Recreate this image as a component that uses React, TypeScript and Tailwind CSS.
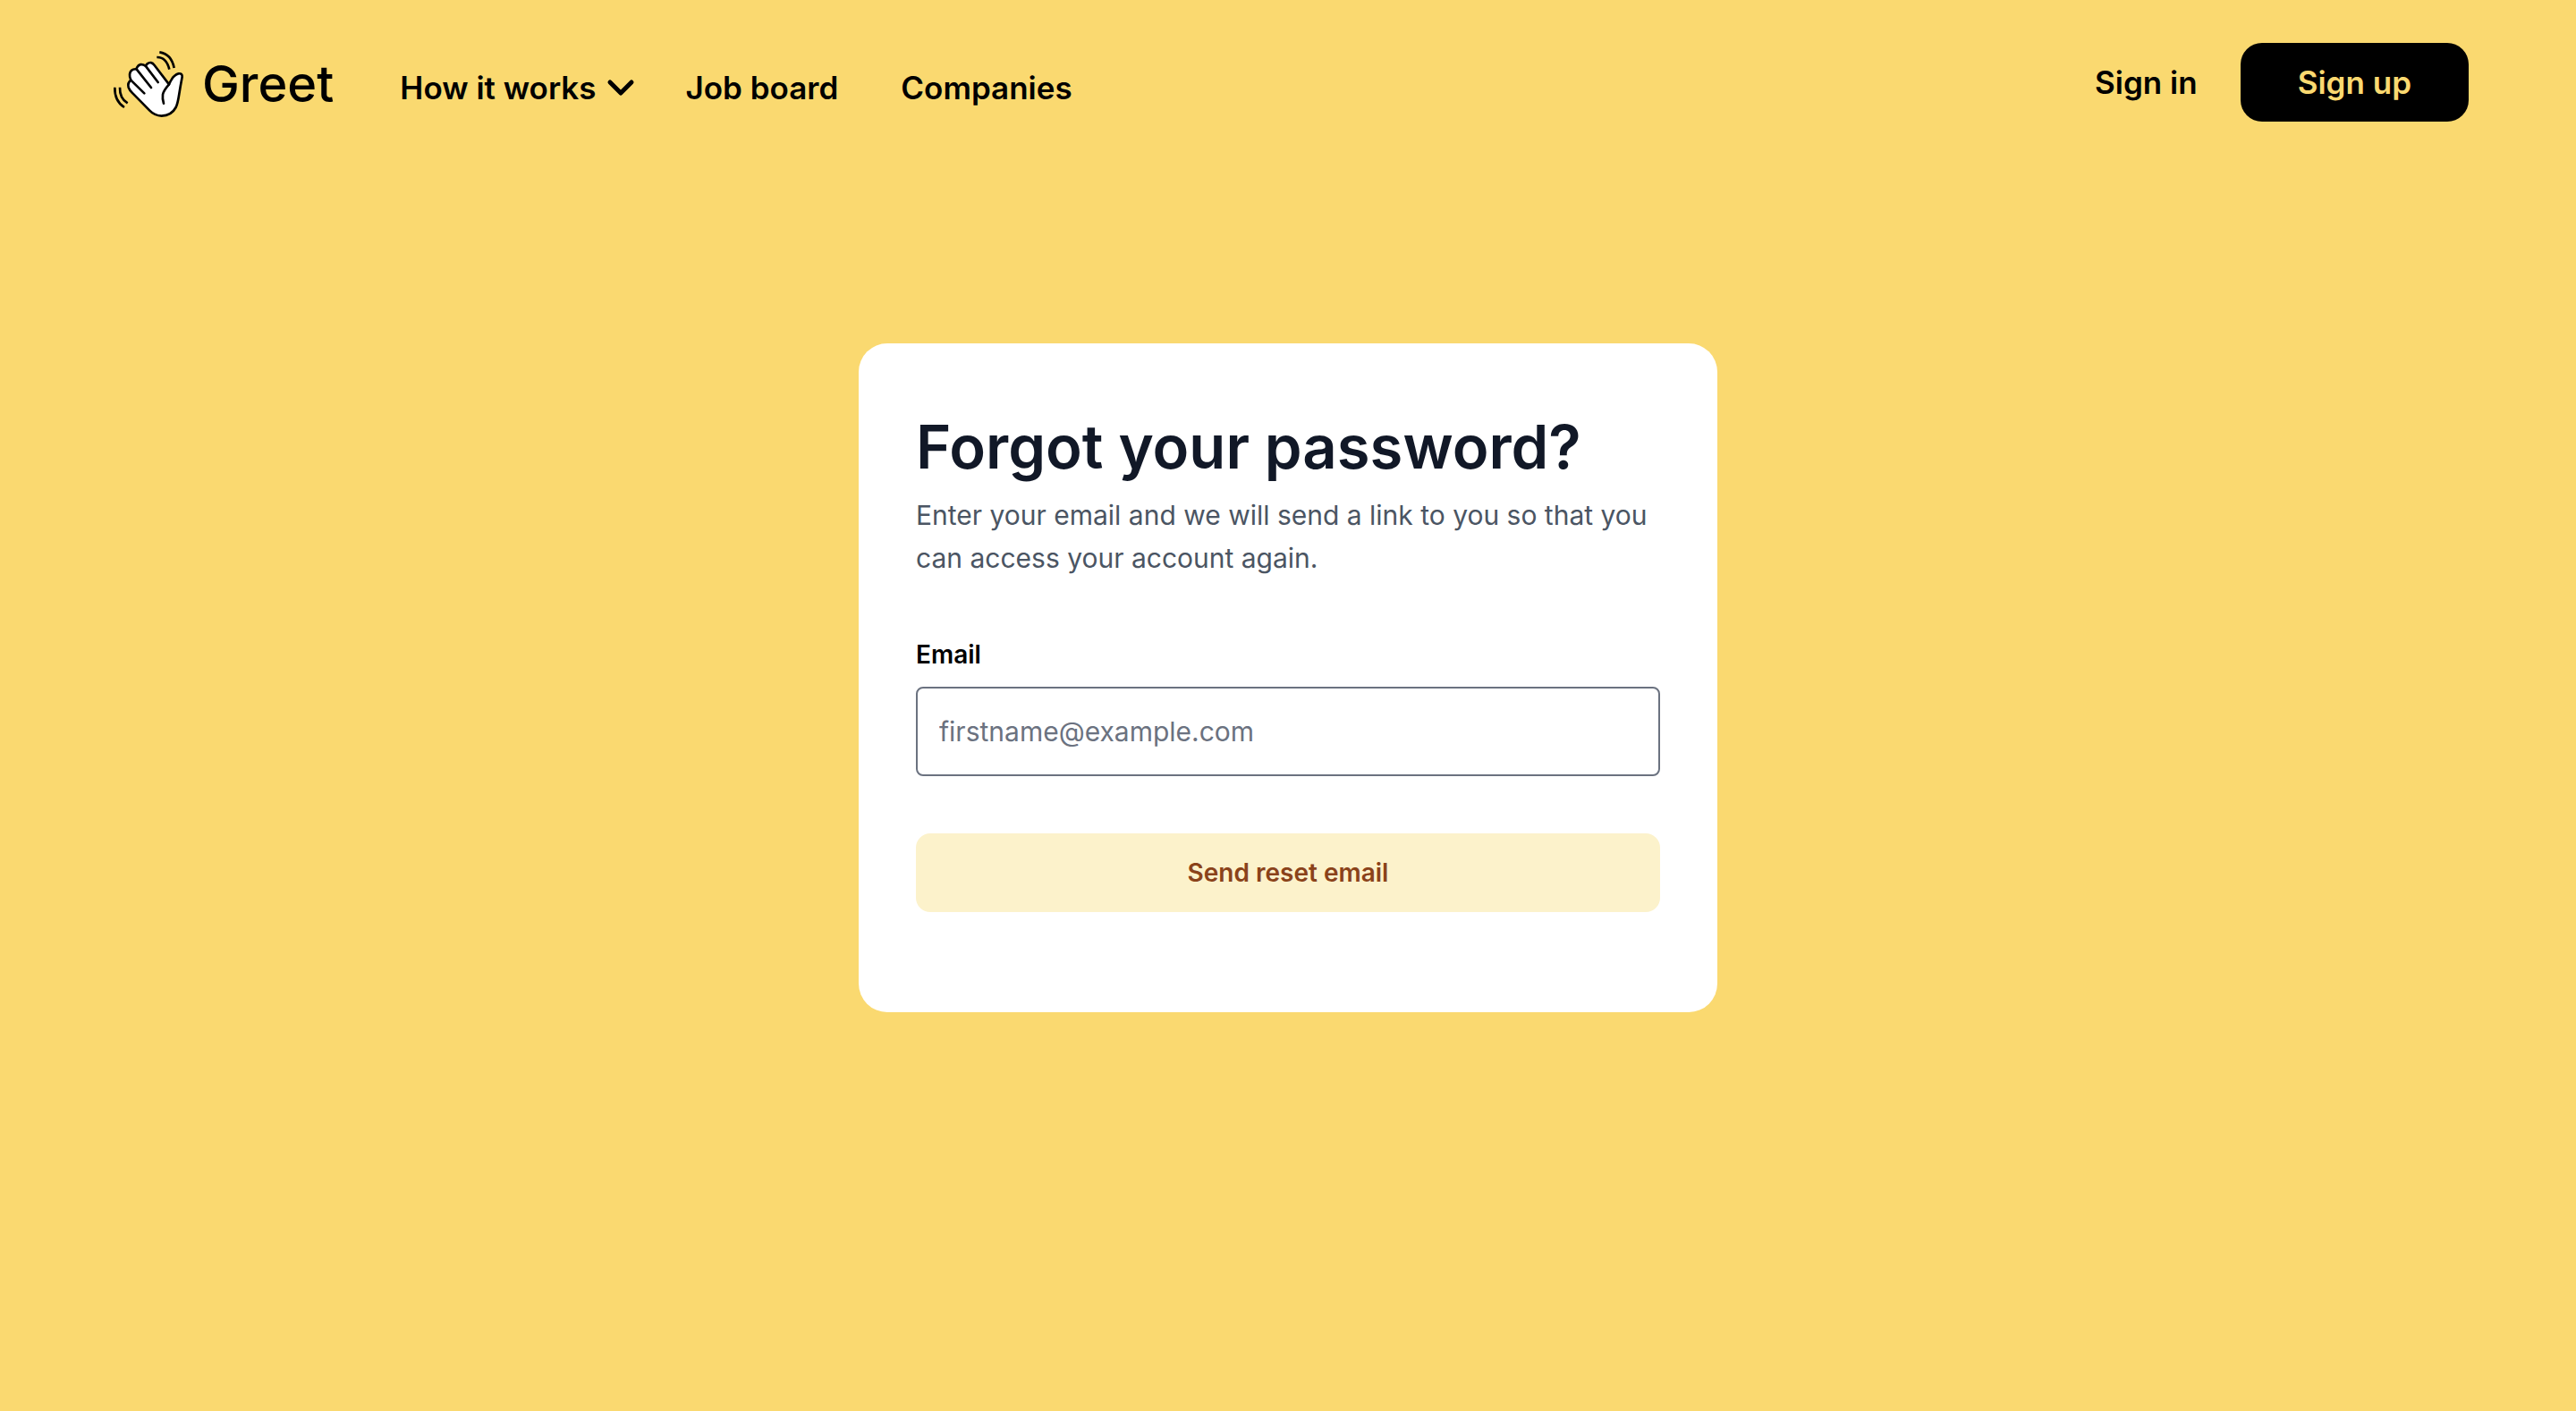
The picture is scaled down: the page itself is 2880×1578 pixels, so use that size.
function WavingHand() {
  return (
    <svg viewBox="48 45 240 228" className="h-[76px] w-20 shrink-0" fill="none" stroke="#000" strokeWidth="8" strokeLinecap="round" strokeLinejoin="round" aria-hidden="true">
      <path
        d="M237 160 L188 96 Q177 81 164 91 L158 98 Q139 86 129 104 L128 109 Q108 107 105 126 Q104 136 109 146 Q97 155 101 170 Q105 180 113 188 L172 248 Q188 265 212 266 Q245 265 260 237 Q266 225 271 192 Q275 166 281 135 Q282 122 269 124 Q254 129 246 143 Q241 151 237 160 Z"
        fill="#fff"
      />
      <path d="M237 160 Q219 180 216 194 Q214 209 219 224" />
      <path d="M158 98 L200 153" />
      <path d="M128 109 L177 171" />
      <path d="M109 146 L154 190" />
      <path d="M205 52 Q245 58 254 105" strokeLinecap="butt" />
      <path d="M196 69 Q228 68 238 110" strokeLinecap="butt" />
      <path d="M72 170 Q71 207 98 223" strokeLinecap="butt" />
      <path d="M55 170 Q54 216 87 237" strokeLinecap="butt" />
    </svg>
  );
}

function Chevron() {
  return (
    <svg viewBox="0 0 32 20" className="h-5 w-8" fill="none" stroke="currentColor" strokeWidth="5" strokeLinecap="round" strokeLinejoin="round" aria-hidden="true">
      <path d="M4 4 L16 16 L28 4" />
    </svg>
  );
}

export default function App() {
  return (
    <div className="min-h-screen bg-[#fad970] font-['Inter',sans-serif] text-black">
      <header className="flex items-start justify-between px-[120px] pt-12">
        <div className="flex items-center">
          <a href="#home" className="flex items-center gap-5 pl-1.5 text-[56px] leading-[92px] font-medium">
            <WavingHand />
            Greet
          </a>
          <nav className="flex items-center pt-2 pl-[74px] text-[35px] leading-10 font-semibold">
            <button type="button" className="flex items-center gap-3">
              How it works
              <Chevron />
            </button>
            <a href="#jobs" className="ml-14">Job board</a>
            <a href="#companies" className="ml-[70px]">Companies</a>
          </nav>
        </div>
        <div className="flex items-center gap-12 text-[35px] leading-10 font-semibold">
          <a href="#signin">Sign in</a>
          <a href="#signup" className="rounded-3xl bg-black px-16 py-6 text-[#fad970]">Sign up</a>
        </div>
      </header>

      <main className="mt-[244px] flex justify-center">
        <section className="w-full max-w-[960px] rounded-[32px] bg-white px-16 pt-[76px] pb-28">
          <h1 className="text-[67px] leading-[80px] font-semibold text-[#111827]">Forgot your password?</h1>
          <p className="mt-3 text-[30px] leading-[48px] text-[#4b5563]">
            Enter your email and we will send a link to you so that you can access your account again.
          </p>
          <form className="mt-16" onSubmit={(e) => e.preventDefault()}>
            <label htmlFor="email" className="block text-[28px] leading-10 font-semibold">Email</label>
            <input
              id="email"
              type="email"
              placeholder="firstname@example.com"
              className="mt-4 block h-[100px] w-full rounded-lg border-2 border-[#6b7280] px-6 text-[30px] placeholder:text-[#6b7280]"
            />
            <button type="submit" className="mt-16 block w-full rounded-2xl bg-[#fcf2cb] py-6 text-[28px] leading-10 font-semibold text-[#8a421a]">
              Send reset email
            </button>
          </form>
        </section>
      </main>
    </div>
  );
}
